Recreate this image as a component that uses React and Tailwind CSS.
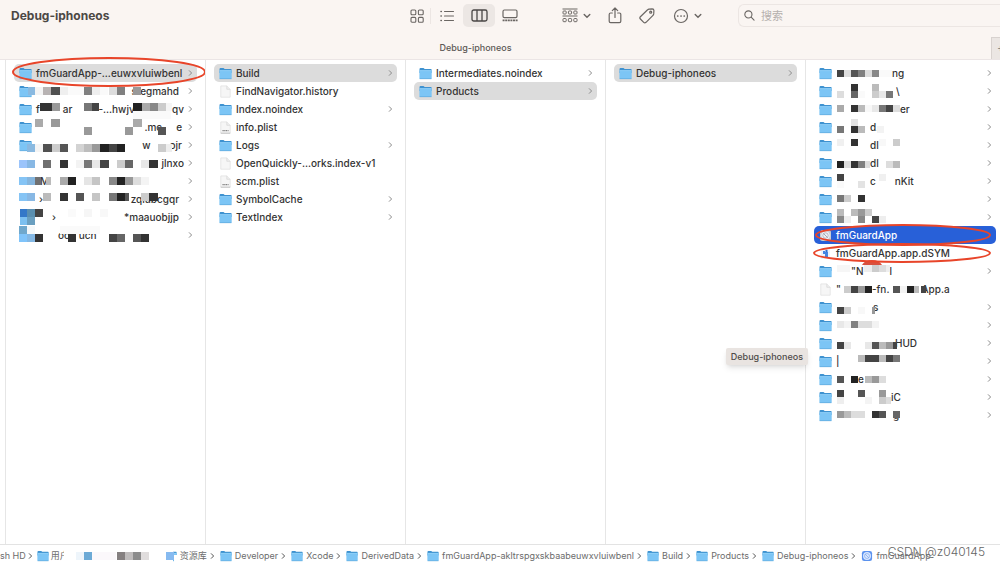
import clsx from "clsx";

// [y, [[x, color, width?], ...]] blocks that hide the private names
const leftBlocks = [
  [87, [[28, "#8ab9e0"], [35, "#f4f4f4"], [43, "#b8b3b3"], [51, "#505050", 9], [60, "#efefef"], [68, "#fafafa", 16], [84, "#808080"], [92, "#eeeeee"], [100, "#fafafa"], [109, "#dddddd"], [117, "#808080"], [133, "#999999"]]],
  [103, [[40, "#333333", 12], [52, "#999999"], [84, "#777777"], [92, "#444444", 7], [133, "#222222", 9], [142, "#aaaaaa"], [150, "#888888"], [158, "#cccccc"], [166, "#f5f5f5", 6]]],
  [111, [[133, "#fafafa", 38]]],
  [119, [[35, "#aaaaaa"], [51, "#999999", 9], [133, "#aaaaaa", 9]]],
  [127, [[84, "#999999"], [125, "#999999"], [158, "#555555"]]],
  [144, [[27, "#8ab9e0"], [35, "#f4f4f4"], [43, "#505050", 9], [52, "#cccccc"], [60, "#555555"], [76, "#d3d3d3"], [84, "#bdbdbd"], [92, "#999999"], [100, "#222222", 9], [109, "#444444"], [117, "#222222"], [158, "#cccccc"], [166, "#eeeeee", 6]]],
  [160, [[19, "#9bc4fb"], [27, "#88b8e4"], [43, "#707070"], [60, "#333333"], [76, "#f3f3f3"], [84, "#777777"], [92, "#e8e8e8"], [100, "#444444", 9], [117, "#cccccc"], [125, "#666666"], [141, "#e8e8e8"], [149, "#333333", 9]]],
  [177, [[19, "#85c4f5"], [27, "#85b5dd"], [35, "#707070", 6], [46, "#bbbbbb", 5], [60, "#aaaaaa"], [68, "#222222"], [84, "#e5e5e5"], [92, "#c5c5c5"], [109, "#888888"], [117, "#222222"], [125, "#999999"], [133, "#dddddd"], [141, "#f4f4f4"]]],
  [193, [[19, "#85c4f5"], [27, "#88b8e4"], [43, "#bbbbbb"], [60, "#333333"], [76, "#555555"], [92, "#c5c5c5"], [109, "#777777"], [117, "#222222"], [125, "#555555", 4], [141, "#cccccc"], [149, "#333333", 9]]],
  [209, [[20, "#3478c8", 7], [27, "#5a8fb0"], [35, "#444444"], [68, "#fafafa"], [84, "#f6f6f6"], [100, "#f8f8f8"]]],
  [217, [[20, "#7cc0f0", 7], [27, "#6a9fc0"]]],
  [226, [[19, "#70a8cc"], [27, "#f4f8fa"], [60, "#fafafa", 40]]],
  [234, [[19, "#80c4fa"], [27, "#84b8e4"], [35, "#333333"], [68, "#333333"], [109, "#444444"], [117, "#666666"], [133, "#555555"], [141, "#333333"]]],
];

const rightBlocks = [
  [70, [[837, "#444444"], [844, "#dddddd"], [851, "#555555"], [858, "#808080"], [865, "#dddddd"], [872, "#888888"], [879, "#fafafa", 13]]],
  [84, [[851, "#333333"], [872, "#bbbbbb"]]],
  [91, [[837, "#dddddd"], [851, "#666666"], [858, "#fafafa"], [872, "#cccccc"], [879, "#e8e8e8"], [886, "#777777"]]],
  [105, [[837, "#aaaaaa"], [851, "#333333"], [858, "#bbbbbb"], [865, "#f8f8f8"], [872, "#e8e8e8"], [879, "#777777"], [886, "#444444"], [893, "#dddddd"]]],
  [119, [[851, "#e3e3e3"]]],
  [126, [[837, "#777777"], [851, "#333333"], [858, "#bbbbbb"], [877, "#f3f3f3"]]],
  [139, [[837, "#f0f0f0"], [851, "#333333"], [893, "#cccccc"], [879, "#f8f8f8"]]],
  [161, [[837, "#222222"], [844, "#dddddd"], [851, "#333333"], [858, "#808080"], [865, "#dddddd", 5], [886, "#dddddd"], [893, "#bbbbbb"]]],
  [174, [[837, "#444444"], [879, "#f0f0f0"]]],
  [181, [[858, "#e3e3e3"], [837, "#fafafa"]]],
  [195, [[837, "#777777"], [844, "#cccccc"], [858, "#333333"]]],
  [209, [[837, "#bbbbbb"], [851, "#bbbbbb"], [858, "#999999"], [865, "#cccccc"]]],
  [216, [[837, "#888888"], [844, "#eeeeee"], [858, "#888888"], [872, "#444444"], [879, "#eeeeee"]]],
  [265, [[837, "#f6f6f6", 13], [864, "#eeeeee", 8], [872, "#cccccc"], [879, "#dddddd"], [886, "#eeeeee", 4]]],
  [286, [[844, "#cccccc"], [851, "#444444"], [858, "#999999"], [865, "#222222"], [893, "#555555"], [900, "#f3f3f3"], [907, "#222222"], [914, "#bbbbbb", 5], [921, "#444444", 5]]],
  [307, [[837, "#444444"], [844, "#cccccc"], [858, "#f8f8f8"], [872, "#999999", 3]]],
  [321, [[837, "#e8e8e8"], [844, "#f3f3f3"], [851, "#808080"], [858, "#dddddd"], [865, "#dddddd"], [872, "#f3f3f3"]]],
  [342, [[837, "#444444"], [844, "#e8e8e8"], [865, "#e8e8e8"], [872, "#555555"], [879, "#bbbbbb"], [886, "#999999"], [893, "#444444", 4]]],
  [355, [[858, "#bbbbbb"], [865, "#444444", 14], [879, "#bbbbbb"], [886, "#444444"], [893, "#777777"]]],
  [376, [[837, "#555555"], [851, "#222222"], [865, "#bbbbbb"], [872, "#999999"], [879, "#dddddd"]]],
  [390, [[837, "#444444"], [858, "#555555"], [879, "#999999"]]],
  [397, [[837, "#eeeeee"], [865, "#f4f4f4"], [879, "#cccccc"], [886, "#dddddd", 5]]],
  [411, [[837, "#999999"], [844, "#bbbbbb"], [851, "#dddddd"], [858, "#dddddd"], [872, "#333333"], [879, "#555555"], [893, "#666666"]]],
];

const columns = [
  [
    { icon: "folder", name: "fmGuardApp-...euwxvluiwbenl", selected: true, arrow: true },
    { icon: "folder", parts: [["ml-auto mr-[5px]", "stegmahd"]], arrow: true },
    { icon: "folder", parts: [["", "f"], ["ml-[23px]", "ar"], ["ml-auto", "-...hwjvs"], ["ml-[32px]", "qv"]], arrow: true },
    { icon: "folder", parts: [["ml-auto", ".mc"], ["ml-[14px] mr-[2px]", "e"]], arrow: true },
    { icon: "folder", parts: [["ml-auto", "w"], ["ml-[19px] mr-[2px]", "ojr"]], arrow: true },
    { parts: [["ml-auto", "jlnxo"]], arrow: true },
    { parts: [["ml-[4px]", "M"]], arrow: true },
    { parts: [["ml-[3px]", "›"], ["ml-auto mr-[5px]", "zqiubcgqr"]], arrow: true },
    { parts: [["ml-[16px]", "›"], ["ml-auto mr-[5px]", "*maauobjjp"]], arrow: true },
    { parts: [["ml-[22px]", "oc"], ["ml-[9px]", "uch"]], arrow: true },
  ],
  [
    { icon: "folder", name: "Build", selected: true, arrow: true },
    { icon: "file", name: "FindNavigator.history" },
    { icon: "folder", name: "Index.noindex", arrow: true },
    { icon: "plist", name: "info.plist" },
    { icon: "folder", name: "Logs", arrow: true },
    { icon: "file", name: "OpenQuickly-...orks.index-v1" },
    { icon: "plist", name: "scm.plist" },
    { icon: "folder", name: "SymbolCache", arrow: true },
    { icon: "folder", name: "TextIndex", arrow: true },
  ],
  [
    { icon: "folder", name: "Intermediates.noindex", arrow: true },
    { icon: "folder", name: "Products", selected: true, arrow: true },
  ],
  [{ icon: "folder", name: "Debug-iphoneos", selected: true, arrow: true }],
  [
    { icon: "folder", parts: [["ml-[56px]", "ng"]], arrow: true },
    { icon: "folder", parts: [["ml-[60px]", "\\"]], arrow: true },
    { icon: "folder", parts: [["ml-[64px]", "er"]], arrow: true },
    { icon: "folder", parts: [["ml-[34px]", "d."]], arrow: true },
    { icon: "folder", parts: [["ml-[34px]", "dl"]], arrow: true },
    { icon: "folder", parts: [["ml-[34px]", "dl"]], arrow: true },
    { icon: "folder", parts: [["ml-[34px]", "c"], ["ml-[19px]", "nKit"]], arrow: true },
    { icon: "folder", parts: [], arrow: true },
    { icon: "folder", parts: [], arrow: true },
    { icon: "app", name: "fmGuardApp", active: true },
    { icon: "dsym", name: "fmGuardApp.app.dSYM" },
    { icon: "folder", parts: [["ml-[15px]", "\"N"], ["ml-[26px]", "l"]], arrow: true },
    { icon: "file", parts: [["", "\""], ["ml-[31px]", "-fn."], ["ml-[32px]", "App.a"]] },
    { icon: "folder", parts: [["ml-[37px]", "s"]], arrow: true },
    { icon: "folder", parts: [], arrow: true },
    { icon: "folder", parts: [["ml-[59px]", "HUD"]], arrow: true },
    { icon: "folder", parts: [["", "|"]], arrow: true },
    { icon: "folder", parts: [["ml-[22px]", "e"]], arrow: true },
    { icon: "folder", parts: [["ml-[55px]", "iC"]], arrow: true },
    { icon: "folder", parts: [["ml-[57px]", "g"]], arrow: true },
  ],
];

const FolderIcon = ({ className = "h-[13px] w-[13px]" }) => (
  <svg viewBox="0 0 13 13" className={clsx("shrink-0", className)}>
    <path d="M.5 2.2Q.5 1 1.5 1h3l1.2 1H12q.6 0 .6.7V6H.5z" fill="#3e92d0" />
    <rect x=".4" y="3.2" width="12.3" height="8.8" rx=".8" fill="#7cc5f5" />
    <path d="M.5 3.6h12" stroke="#a0d9fb" strokeWidth=".6" />
    <path d="M.6 11.7h11.9" stroke="#5aa5d8" strokeWidth=".6" />
  </svg>
);

const FileIcon = ({ plist }) => (
  <svg viewBox="0 0 13 13" className="h-[13px] w-[13px] shrink-0">
    <path d="M1.8.9h6l3.4 3.4v7.9H1.8z" fill="#f6f6f6" stroke="#dedede" strokeWidth=".7" />
    <path d="M7.8.9v3.4h3.4" fill="#eee" stroke="#d4d4d4" strokeWidth=".6" />
    {plist && <path d="M3.5 9.7h6" stroke="#777" strokeWidth="1.2" strokeDasharray="1.2 .6" />}
    {plist && <path d="M1.8 12.2h9.4" stroke="#aaa" strokeWidth=".6" />}
  </svg>
);

const AppIcon = ({ blue, className = "h-[13px] w-[13px]" }) => (
  <svg viewBox="0 0 13 13" className={clsx("shrink-0", className)}>
    <rect x="1" y="1" width="11" height="11" rx="2.5" fill={blue ? "#5b92ee" : "#c8cbd3"} />
    <circle cx="6.5" cy="6.5" r="4.3" fill={blue ? "#dbe8ff" : "#eef0f5"} />
    <circle cx="6.5" cy="6.5" r="2.7" fill="none" stroke={blue ? "#7ba6ec" : "#a2a6b0"} strokeWidth=".7" />
    <path d="m4.500 4.500 4 4" stroke={blue ? "#7ba6ec" : "#9296a0"} strokeWidth=".8" />
  </svg>
);

const DsymIcon = () => (
  <svg viewBox="0 0 13 13" className="h-[13px] w-[13px] shrink-0">
    <rect x="2" y="1" width="9" height="11" rx="1" fill="#eef3fa" />
    <path d="M4 4h2v3H4zM6 5h3v5H6z" fill="#4385e4" />
    <circle cx="7.5" cy="4" r="1.2" fill="#2e6fd0" />
  </svg>
);

const Chevron = ({ className }) => (
  <svg viewBox="0 0 5 8" className={clsx("h-[8px] w-[5px] shrink-0", className)}>
    <path d="m1 1.4 2.6 2.6L1 6.6" fill="none" stroke="currentColor" strokeWidth="1" />
  </svg>
);

const Down = () => (
  <svg viewBox="0 0 8 6" className="h-[6px] w-[8px]">
    <path d="m1.2 1.5 2.8 2.8 2.8-2.8" fill="none" stroke="currentColor" strokeWidth="1.4" strokeLinecap="round" />
  </svg>
);

const ItemIcon = ({ icon }) => {
  if (icon === "folder") return <FolderIcon />;
  if (icon === "app") return <AppIcon />;
  if (icon === "dsym") return <DsymIcon />;
  if (icon) return <FileIcon plist={icon === "plist"} />;
  return <span className="w-[13px] shrink-0" />;
};

const Row = ({ item }) => (
  <li>
    <button
      type="button"
      className={clsx(
        "flex h-[18px] w-full items-center gap-1 whitespace-nowrap rounded-[5px] pl-[5px] pr-[4px] text-left text-[10px] font-medium",
        item.selected && "bg-[#dcdcdc]",
        item.active ? "bg-[#2860d8] text-white" : "text-[#333333]"
      )}
    >
      <ItemIcon icon={item.icon} />
      <span className="flex min-w-0 flex-1">
        {item.name}
        {item.parts?.map(([cls, text], i) => (
          <span key={i} className={cls}>{text}</span>
        ))}
      </span>
      {item.arrow && <Chevron className="text-[#8c8c8c]" />}
    </button>
  </li>
);

const Blocks = ({ rows, size, left }) => (
  <svg
    viewBox={`${left} 60 200 484`}
    className="pointer-events-none absolute left-0 top-0 h-[484px] w-[200px] overflow-visible"
    shapeRendering="crispEdges"
    aria-hidden="true"
  >
    {rows.map(([y, cells]) =>
      cells.map(([x, color, w = size]) => (
        <rect key={`${x}-${y}`} x={x} y={y} width={w} height={size} fill={color} />
      ))
    )}
  </svg>
);

const Toolbar = () => (
  <div className="flex h-[31px] items-center text-[#6a6663]">
    <h1 className="w-[403px] shrink-0 pl-[11px] text-[12px] font-bold text-[#4c4845]">Debug-iphoneos</h1>
    <button type="button" aria-label="Icons" className="flex h-[23px] w-[27px] items-center justify-center">
      <svg viewBox="0 0 14 14" className="size-[14px]" fill="none" stroke="currentColor" strokeWidth="1.1">
        <rect x="1" y="1" width="4.8" height="4.8" rx="1" />
        <rect x="8.4" y="1" width="4.8" height="4.8" rx="1" />
        <rect x="1" y="8.4" width="4.8" height="4.8" rx="1" />
        <rect x="8.4" y="8.4" width="4.8" height="4.8" rx="1" />
      </svg>
    </button>
    <span className="h-[16px] w-px bg-[#ece6e3]" />
    <button type="button" aria-label="List" className="flex h-[23px] w-[32px] items-center justify-center">
      <svg viewBox="0 0 14 12" className="h-[12px] w-[14px]" fill="none" stroke="currentColor" strokeWidth="1.1" strokeLinecap="round">
        <path d="M4.5 1.5h9M4.5 6h9M4.5 10.5h9" />
        <path d="M1 1.5h.3M1 6h.3M1 10.5h.3" strokeWidth="1.6" />
      </svg>
    </button>
    <button type="button" aria-label="Columns" aria-pressed="true" className="flex h-[23px] w-[32px] items-center justify-center rounded-[5px] bg-[#ece7e4] text-[#4a4745]">
      <svg viewBox="0 0 17 13" className="h-[13px] w-[17px]" fill="none" stroke="currentColor" strokeWidth="1.3">
        <rect x="1" y="1" width="15" height="11" rx="1.8" />
        <path d="M6 1v11M11 1v11" />
      </svg>
    </button>
    <button type="button" aria-label="Gallery" className="flex h-[23px] w-[30px] items-center justify-center">
      <svg viewBox="0 0 16 13" className="h-[13px] w-[16px]" fill="none" stroke="currentColor" strokeWidth="1.2">
        <rect x="1" y="1" width="14" height="7.6" rx="1.4" />
        <path d="M.6 11.4h15" strokeWidth="1.8" strokeDasharray="2 .6" />
      </svg>
    </button>
    <button type="button" aria-label="Group" className="ml-[37px] flex h-[23px] items-center gap-[5px]">
      <svg viewBox="0 0 16 15" className="h-[15px] w-[16px]" fill="none" stroke="currentColor" strokeWidth="1">
        <path d="M.5 1h15M.5 8h15" />
        <rect x="1" y="3" width="3.2" height="3" rx=".8" />
        <rect x="6.4" y="3" width="3.2" height="3" rx=".8" />
        <rect x="11.8" y="3" width="3.2" height="3" rx=".8" />
        <rect x="1" y="10.5" width="3.2" height="3.2" rx=".8" />
        <rect x="6.4" y="10.5" width="3.2" height="3.2" rx=".8" />
        <rect x="11.8" y="10.5" width="3.2" height="3.2" rx=".8" />
      </svg>
      <Down />
    </button>
    <button type="button" aria-label="Share" className="ml-[17px] flex h-[23px] items-center">
      <svg viewBox="0 0 14 17" className="h-[17px] w-[14px]" fill="none" stroke="currentColor" strokeWidth="1.2" strokeLinecap="round" strokeLinejoin="round">
        <path d="M4.3 6H2.6Q1.2 6 1.2 7.4v6.8q0 1.4 1.4 1.4h8.8q1.4 0 1.4-1.4V7.4Q12.8 6 11.4 6H9.7" />
        <path d="M7 10.5V1.2M4.3 3.7 7 1l2.7 2.7" />
      </svg>
    </button>
    <button type="button" aria-label="Tags" className="ml-[17px] flex h-[23px] items-center">
      <svg viewBox="0 0 16 16" className="size-[16px]" fill="none" stroke="currentColor" strokeWidth="1.2" strokeLinejoin="round">
        <path d="M8.600 1.800Q9.200 1.200 10 1.100l3.200-.2q1.700 0 1.700 1.700l-.2 3.300q-.1.800-.7 1.400l-7 7q-1.200 1.100-2.300 0L1.400 11q-1.100-1.100 0-2.300z" />
        <circle cx="11.7" cy="4.2" r="1" />
      </svg>
    </button>
    <button type="button" aria-label="Actions" className="ml-[18px] flex h-[23px] items-center gap-[5px]">
      <svg viewBox="0 0 16 16" className="size-[16px]" fill="none" stroke="currentColor" strokeWidth="1.2">
        <circle cx="8" cy="8" r="6.5" />
        <path d="M4.700 8h.1M8 8h.1M11.200 8h.1" strokeWidth="1.7" strokeLinecap="round" />
      </svg>
      <Down />
    </button>
    <label className="ml-[36px] flex h-[23px] min-w-0 flex-1 items-center gap-[6px] rounded-l-[6px] border border-r-0 border-[#ece6e3] pl-[5px]">
      <svg viewBox="0 0 12 12" className="size-[11px] shrink-0" fill="none" stroke="currentColor" strokeWidth="1.2" strokeLinecap="round">
        <circle cx="4.8" cy="4.8" r="3.9" />
        <path d="m7.800 7.800 3.200 3.200" />
      </svg>
      <input
        type="text"
        aria-label="搜索"
        placeholder="搜索"
        className="w-full min-w-0 bg-transparent pt-[2px] text-[11px] outline-none placeholder:text-[#b5b0ad]"
      />
    </label>
  </div>
);

const Crumb = ({ children, icon, last }) => (
  <li className="flex shrink-0 items-center">
    {icon}
    <a href="#" className="ml-[3px]">{children}</a>
    {!last && <Chevron className="ml-[3px] mr-[5px] text-[#555555]" />}
  </li>
);

const smallFolder = <FolderIcon className="h-[12px] w-[12px]" />;

const PathBar = () => (
  <nav className="relative h-[22px] overflow-hidden border-t border-[#e3e3e3] bg-white">
    <ol className="flex h-[21px] items-center whitespace-nowrap text-[9px] text-[#6c6c6c]">
      <li className="flex shrink-0 items-center">
        <a href="#">sh HD</a>
        <Chevron className="ml-[2px] mr-[4px] text-[#555555]" />
      </li>
      <li className="flex w-[128px] shrink-0 items-center">
        {smallFolder}
        <a href="#" className="ml-[2px]">用户</a>
      </li>
      <Crumb icon={smallFolder}>资源库</Crumb>
      <Crumb icon={smallFolder}>Developer</Crumb>
      <Crumb icon={smallFolder}>Xcode</Crumb>
      <Crumb icon={smallFolder}>DerivedData</Crumb>
      <Crumb icon={smallFolder}>fmGuardApp-akltrspgxskbaabeuwxvluiwbenl</Crumb>
      <Crumb icon={smallFolder}>Build</Crumb>
      <Crumb icon={smallFolder}>Products</Crumb>
      <Crumb icon={smallFolder}>Debug-iphoneos</Crumb>
      <Crumb icon={<AppIcon blue className="h-[12px] w-[12px]" />} last>fmGuardApp</Crumb>
    </ol>
    <svg viewBox="0 544 180 22" className="pointer-events-none absolute left-0 top-[-1px] h-[22px] w-[180px]" shapeRendering="crispEdges" aria-hidden="true">
      <rect x="64" y="544" width="68" height="20" fill="#fff" />
      <rect x="76" y="552" width="8" height="8" fill="#eef5fb" />
      <rect x="84" y="552" width="8" height="8" fill="#6caad6" />
      <rect x="92" y="552" width="24" height="8" fill="#fbf8fb" />
      <rect x="117" y="552" width="8" height="8" fill="#858080" />
      <rect x="125" y="552" width="8" height="8" fill="#bfbcbc" />
      <rect x="133" y="552" width="8" height="8" fill="#8c8c8c" />
      <rect x="141" y="552" width="8" height="8" fill="#e0dddd" />
      <rect x="162" y="548" width="11" height="14" fill="#fff" />
      <rect x="166" y="552" width="8" height="8" fill="#86baf0" />
      <rect x="174" y="555" width="5" height="8" fill="#fff" />
    </svg>
    <span className="absolute right-[15px] top-0 text-[12px] font-light leading-[14px] text-[#666666]">CSDN @z040145</span>
  </nav>
);

export default function App() {
  return (
    <div className="relative flex min-h-screen flex-col overflow-hidden bg-white font-['Inter','Noto_Sans_CJK_SC',sans-serif]">
      <header className="border-b border-[#ebe5e5] bg-[#faf5f2]">
        <Toolbar />
        <div className="flex h-[28px] items-end">
          <p className="flex-1 self-center pt-[6px] text-center text-[9px] font-medium text-[#5c5855]">
            <span className="pr-[40px]">Debug-iphoneos</span>
          </p>
          <button type="button" aria-label="New tab" className="h-[22px] w-[9px] overflow-hidden border-l border-t border-[#d8d2cf] bg-[#ebe6e3] pl-[5px] text-left text-[11px] text-[#777777]">
            +
          </button>
        </div>
      </header>

      <main className="grid flex-1 grid-cols-[200fr_200fr_200fr_200fr_195fr] pl-[5px]">
        {columns.map((items, i) => (
          <section
            key={i}
            className={clsx("relative min-w-0 border-l border-[#e6e6e6] pl-[8px] pt-[4px]", i === 4 ? "pr-[4px]" : "pr-[8px]")}
          >
            <ul>
              {items.map((item, j) => (
                <Row key={j} item={item} />
              ))}
            </ul>
            {i === 0 && <Blocks rows={leftBlocks} size={8} left={6} />}
            {i === 0 && (
              <svg viewBox="6 60 200 30" className="pointer-events-none absolute left-0 top-0 h-[30px] w-[200px] overflow-visible" aria-hidden="true">
                <ellipse cx="109" cy="72" rx="96" ry="14" fill="none" stroke="#e8452a" strokeWidth="2" />
              </svg>
            )}
            {i === 3 && (
              <div role="tooltip" className="absolute right-[-3px] top-[288px] z-10 whitespace-nowrap rounded-[2px] bg-[#e9e4e1] px-[5px] text-[9px] font-medium leading-[17px] text-[#4f4b49] shadow-md">
                Debug-iphoneos
              </div>
            )}
            {i === 4 && <Blocks rows={rightBlocks} size={7} left={806} />}
            {i === 4 && (
              <svg viewBox="806 220 194 50" className="pointer-events-none absolute left-0 top-[160px] h-[50px] w-[194px] overflow-visible" fill="none" stroke="#e8452a" strokeWidth="2" aria-hidden="true">
                <path d="M862 265q3-5 10-5t10 5z" fill="#d9503d" stroke="none" />
                <ellipse cx="903" cy="235" rx="87" ry="10" />
                <ellipse cx="902" cy="253" rx="88" ry="9" />
              </svg>
            )}
          </section>
        ))}
      </main>

      <PathBar />
    </div>
  );
}
